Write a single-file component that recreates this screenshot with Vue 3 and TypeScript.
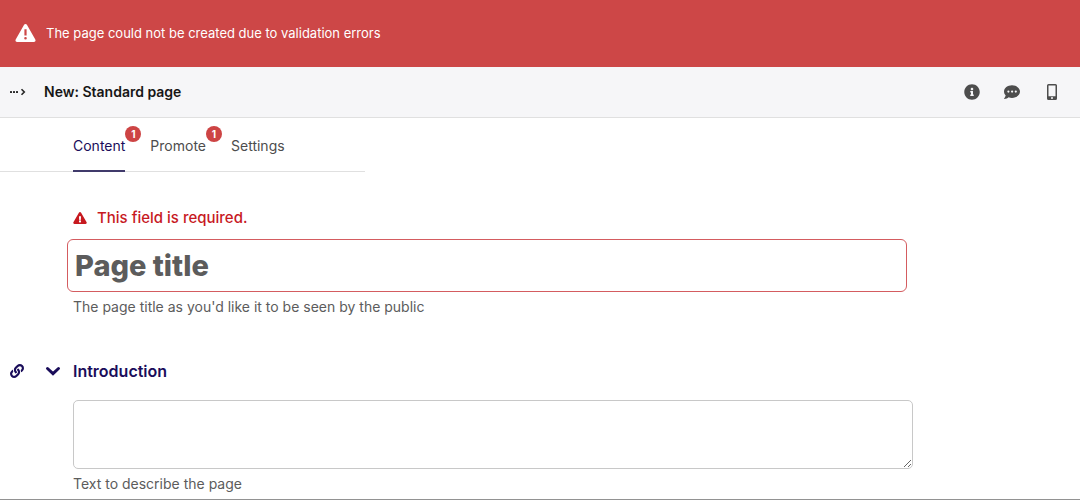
<script setup lang="ts">
import { ref } from 'vue'

interface Tab {
  id: string
  label: string
  errors: number
}

const tabs: Tab[] = [
  { id: 'content', label: 'Content', errors: 1 },
  { id: 'promote', label: 'Promote', errors: 1 },
  { id: 'settings', label: 'Settings', errors: 0 },
]

const activeTab = ref('content')
const title = ref('')
const introduction = ref('')
const expanded = ref(true)
</script>

<template>
  <div class="page">
    <div class="banner" role="alert">
      <svg class="banner-icon" viewBox="0 0 21 20" aria-hidden="true">
        <path fill="currentColor" fill-rule="evenodd" d="M10.500 1c.6 0 1.100.3 1.400.8l8.400 14.600c.7 1.200-.1 2.600-1.500 2.600H2.200c-1.400 0-2.200-1.400-1.500-2.600L9.100 1.800c.3-.5.8-.8 1.400-.8zM9.400 6.200v6.200h2.200V6.200zM10.500 13.900a1.300 1.300 0 1 0 0 2.600 1.300 1.300 0 0 0 0-2.600z" />
      </svg>
      <span>The page could not be created due to validation errors</span>
    </div>

    <header class="header">
      <button class="icon-button crumbs" type="button" aria-label="Toggle breadcrumbs">
        <svg width="16" height="8" viewBox="0 0 16 8" aria-hidden="true">
          <g fill="currentColor">
            <rect x="0" y="3" width="2" height="2" rx=".5" />
            <rect x="3" y="3" width="2" height="2" rx=".5" />
            <rect x="6" y="3" width="2" height="2" rx=".5" />
          </g>
          <path d="M11.500 1.200 14.300 4l-2.800 2.800" fill="none" stroke="currentColor" stroke-width="1.600" />
        </svg>
      </button>
      <h1 class="heading">New: Standard page</h1>
      <div class="actions">
        <button class="icon-button" type="button" aria-label="Info">
          <svg width="16" height="16" viewBox="0 0 512 512" aria-hidden="true">
            <path fill="currentColor" d="M256 8C119.043 8 8 119.083 8 256c0 136.997 111.043 248 248 248s248-111.003 248-248C504 119.083 392.957 8 256 8zm0 110c23.196 0 42 18.804 42 42s-18.804 42-42 42-42-18.804-42-42 18.804-42 42-42zm56 254c0 6.627-5.373 12-12 12h-88c-6.627 0-12-5.373-12-12v-24c0-6.627 5.373-12 12-12h12v-64h-12c-6.627 0-12-5.373-12-12v-24c0-6.627 5.373-12 12-12h64c6.627 0 12 5.373 12 12v100h12c6.627 0 12 5.373 12 12v24z" />
          </svg>
        </button>
        <button class="icon-button" type="button" aria-label="Comments">
          <svg width="16" height="16" viewBox="0 0 16 16" aria-hidden="true">
            <path fill="currentColor" fill-rule="evenodd" d="M8 1.300c4.400 0 8 2.800 8 6.300s-3.600 6.300-8 6.300c-1.200 0-2.400-.2-3.400-.6C3.500 14.200 2 14.900.4 14.900c-.3 0-.4-.3-.2-.5.6-.7 1.200-1.700 1.500-2.800C.6 10.500 0 9.100 0 7.600 0 4.100 3.600 1.300 8 1.300zM4.400 6.500a1.100 1.100 0 1 0 0 2.200 1.100 1.100 0 0 0 0-2.200zm3.700 0a1.100 1.100 0 1 0 0 2.200 1.100 1.100 0 0 0 0-2.200zm3.700 0a1.100 1.100 0 1 0 0 2.200 1.100 1.100 0 0 0 0-2.200z" />
          </svg>
        </button>
        <button class="icon-button" type="button" aria-label="Preview">
          <svg width="16" height="16" viewBox="0 0 16 16" aria-hidden="true">
            <path fill="currentColor" fill-rule="evenodd" d="M4.500 0h7A1.500 1.500 0 0 1 13 1.500v13a1.500 1.500 0 0 1-1.500 1.500h-7A1.500 1.500 0 0 1 3 14.500v-13A1.500 1.500 0 0 1 4.500 0zm0 1.500v10.700h7V1.500zM8 13a1 1 0 1 0 0 2 1 1 0 0 0 0-2z" />
          </svg>
        </button>
      </div>
    </header>

    <div class="tabs" role="tablist">
      <button
        v-for="tab in tabs"
        :key="tab.id"
        class="tab"
        :class="{ active: tab.id === activeTab }"
        type="button"
        role="tab"
        :aria-selected="tab.id === activeTab"
        @click="activeTab = tab.id"
      >
        {{ tab.label }}
        <span v-if="tab.errors" class="badge">{{ tab.errors }}</span>
      </button>
    </div>

    <main class="form">
      <section class="title-field">
        <p id="title-error" class="error">
          <svg width="14" height="12" viewBox="0 0 576 512" aria-hidden="true">
            <path fill="currentColor" d="M569.517 440.013C587.975 472.007 564.806 512 527.940 512H48.054c-36.937 0-59.999-40.055-41.577-71.987L246.423 23.985c18.467-32.009 64.720-31.951 83.154 0l239.940 416.028zM288 354c-25.405 0-46 20.595-46 46s20.595 46 46 46 46-20.595 46-46-20.595-46-46-46zm-43.673-165.346l7.418 136c.347 6.364 5.609 11.346 11.982 11.346h48.546c6.373 0 11.635-4.982 11.982-11.346l7.418-136c.375-6.874-5.098-12.654-11.982-12.654h-63.383c-6.884 0-12.356 5.780-11.981 12.654z" />
          </svg>
          <span>This field is required.</span>
        </p>
        <input
          v-model="title"
          class="title-input"
          type="text"
          placeholder="Page title"
          aria-label="Page title"
          aria-invalid="true"
          aria-describedby="title-error title-help"
        />
        <p id="title-help" class="help">The page title as you'd like it to be seen by the public</p>
      </section>

      <section>
        <div class="panel-header">
          <a class="anchor" href="#introduction" aria-label="Link to Introduction">
            <svg width="14" height="14" viewBox="0 0 512 512" aria-hidden="true">
              <path fill="currentColor" d="M326.612 185.391c59.747 59.809 58.927 155.698.36 214.590-.11.120-.240.250-.360.370l-67.200 67.200c-59.270 59.270-155.699 59.262-214.960 0-59.270-59.260-59.270-155.700 0-214.960l37.106-37.106c9.840-9.840 26.786-3.300 27.294 10.606.648 17.722 3.826 35.527 9.690 52.721 1.986 5.822.567 12.262-3.783 16.612l-13.087 13.087c-28.026 28.026-28.905 73.660-1.155 101.960 28.024 28.579 74.086 28.749 102.325.510l67.200-67.190c28.191-28.191 28.073-73.757 0-101.830-3.701-3.694-7.429-6.564-10.341-8.569a16.037 16.037 0 0 1-6.947-12.606c-.396-10.567 3.348-21.456 11.698-29.806l21.054-21.055c5.521-5.521 14.182-6.199 20.584-1.731a152.482 152.482 0 0 1 20.522 17.197zM467.547 44.449c-59.261-59.262-155.690-59.270-214.960 0l-67.200 67.200c-.120.120-.250.250-.360.370-58.566 58.892-59.387 154.781.360 214.590a152.454 152.454 0 0 0 20.521 17.196c6.402 4.468 15.064 3.789 20.584-1.731l21.054-21.055c8.350-8.350 12.094-19.239 11.698-29.806a16.037 16.037 0 0 0-6.947-12.606c-2.912-2.005-6.640-4.875-10.341-8.569-28.073-28.073-28.191-73.639 0-101.830l67.200-67.190c28.239-28.239 74.300-28.069 102.325.510 27.750 28.300 26.872 73.934-1.155 101.960l-13.087 13.087c-4.350 4.350-5.769 10.790-3.783 16.612 5.864 17.194 9.042 34.999 9.690 52.721.509 13.906 17.454 20.446 27.294 10.606l37.106-37.106c59.271-59.259 59.271-155.699.001-214.959z" />
            </svg>
          </a>
          <button
            class="icon-button toggle"
            type="button"
            aria-label="Toggle Introduction"
            :aria-expanded="expanded"
            @click="expanded = !expanded"
          >
            <svg width="16" height="10" viewBox="0 0 16 10" aria-hidden="true">
              <path d="M2.500 2.500 8 7.600l5.500-5.100" fill="none" stroke="currentColor" stroke-width="3" stroke-linecap="round" />
            </svg>
          </button>
          <h2 class="panel-title"><label for="introduction">Introduction</label></h2>
        </div>
        <div v-show="expanded" class="panel-body">
          <textarea id="introduction" v-model="introduction" class="text-area" aria-describedby="intro-help"></textarea>
          <p id="intro-help" class="help">Text to describe the page</p>
        </div>
      </section>
    </main>
  </div>
</template>

<style>
body {
  margin: 0;
  background: #fff;
}
</style>

<style scoped>
.page {
  box-sizing: border-box;
  min-height: 100vh;
  border-bottom: 1px solid #929292;
  font-family: Inter, "Liberation Sans", sans-serif;
  font-size: 14px;
  line-height: 20px;
  color: #5c5c5c;
}

.page button {
  font: inherit;
  cursor: pointer;
  border: 0;
  background: none;
}

.banner {
  display: flex;
  gap: 10px;
  padding: 23px 15px 24px;
  background: #cd4747;
  color: #fff;
  font-size: 13px;
}

.banner-icon {
  width: 21px;
  height: 20px;
}

.header {
  display: flex;
  align-items: center;
  height: 50px;
  padding: 0 20px 0 10px;
  border-bottom: 1px solid #e0e0e0;
  background: #f6f6f8;
}

.icon-button {
  display: flex;
  align-items: center;
  justify-content: center;
  padding: 0;
  color: #4d4d4d;
}

.crumbs {
  margin-right: 18px;
  color: #262626;
}

.heading {
  margin: 0;
  font-size: 14px;
  font-weight: 600;
  color: #161616;
}

.actions {
  display: flex;
  gap: 24px;
  margin-left: auto;
}

.tabs {
  display: flex;
  gap: 25px;
  box-sizing: border-box;
  width: fit-content;
  padding: 0 80px 0 73px;
  border-bottom: 1px solid #e0e0e0;
}

.page .tab {
  position: relative;
  margin-bottom: -1px;
  padding: 18px 0 14px;
  border-bottom: 2px solid transparent;
  color: #4d4d4d;
}

.page .tab.active {
  border-bottom-color: #403a6b;
  color: #1a0d5a;
}

.badge {
  position: absolute;
  top: 8px;
  right: -16px;
  width: 16px;
  border-radius: 8px;
  background: #cd4444;
  color: #fff;
  font-size: 10px;
  font-weight: 700;
  line-height: 16px;
  text-align: center;
}

.form {
  padding: 36px 73px 0 0;
}

.title-field {
  max-width: 840px;
  margin-left: 73px;
}

.error {
  display: flex;
  align-items: center;
  gap: 10px;
  margin: 0 0 11px;
  color: #c7191f;
  font-size: 15px;
  font-weight: 500;
}

.title-input {
  display: block;
  box-sizing: border-box;
  width: 100%;
  height: 53px;
  margin: 0 0 5px -6px;
  padding: 0 7px;
  border: 1px solid #d45c60;
  border-radius: 6px;
  background: #fff;
  font: 800 29px/36px Inter, "Liberation Sans", sans-serif;
  color: #262626;
}

.title-input::placeholder {
  color: #5c5c5c;
  opacity: 1;
}

.help {
  margin: 0;
}

.panel-header {
  display: flex;
  align-items: center;
  margin-top: 44px;
  padding-left: 10px;
  color: #1a0d5a;
}

.anchor {
  display: flex;
  color: inherit;
}

.page .toggle {
  margin: 0 12px 0 21px;
  color: inherit;
}

.panel-title {
  margin: 0;
  font-size: 16px;
  font-weight: 600;
}

.panel-body {
  max-width: 840px;
  margin: 19px 0 0 73px;
}

.text-area {
  display: block;
  box-sizing: border-box;
  width: 100%;
  height: 69px;
  margin: 0 0 5px;
  padding: 8px;
  border: 1px solid #c8c8c8;
  border-radius: 5px;
  background: #fff;
  font: inherit;
  resize: vertical;
}
</style>
